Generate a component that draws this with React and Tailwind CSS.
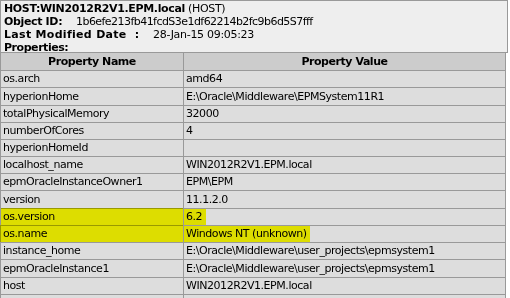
const rows = [
  ['os.arch', 'amd64'],
  ['hyperionHome', 'E:\\Oracle\\Middleware\\EPMSystem11R1', true],
  ['totalPhysicalMemory', '32000'],
  ['numberOfCores', '4'],
  ['hyperionHomeId', ''],
  ['localhost_name', 'WIN2012R2V1.EPM.local'],
  ['epmOracleInstanceOwner1', 'EPM\\EPM'],
  ['version', '11.1.2.0', true],
  ['os.version', '6.2'],
  ['os.name', 'Windows NT (unknown)'],
  ['instance_home', 'E:\\Oracle\\Middleware\\user_projects\\epmsystem1'],
  ['epmOracleInstance1', 'E:\\Oracle\\Middleware\\user_projects\\epmsystem1', true],
  ['host', 'WIN2012R2V1.EPM.local'],
  ['', ''],
]

function Cell({ tall, children }) {
  return (
    <td
      className={
        tall
          ? 'h-[17px] p-0 pl-[2px] border border-[#999] bg-[#dddddd] leading-[17px] whitespace-nowrap'
          : 'h-[16px] p-0 pl-[2px] border border-[#999] bg-[#dddddd] leading-[16px] whitespace-nowrap'
      }
    >
      {children}
    </td>
  )
}

export default function App() {
  return (
    <div className="relative w-[510px] h-[298px] overflow-hidden bg-white text-[11px] text-black font-['Verdana','DejaVu_Sans',sans-serif]">
      <div className="w-[508px] h-[53px] border border-[#999] bg-[#eeeeee] px-[3px] pt-[1px] leading-[13px]">
        <div className="tracking-[-0.35px]">
          <span className="font-bold">HOST:WIN2012R2V1.EPM.local</span> (HOST)
        </div>
        <div className="flex">
          <span className="w-[72px] font-bold tracking-[-0.35px]">Object ID:</span>
          <span className="tracking-[-0.55px]">1b6efe213fb41fcdS3e1df62214b2fc9b6d5S7fff</span>
        </div>
        <div className="flex">
          <span className="w-[149px] font-bold tracking-[0.3px]">Last Modified Date&nbsp;&nbsp;:</span>
          <span className="tracking-[-0.3px]">28-Jan-15 09:05:23</span>
        </div>
        <div className="font-bold tracking-[-0.45px]">Properties:</div>
      </div>

      <table className="w-[506px] border-collapse -mt-px table-fixed tracking-[-0.45px]">
        <thead>
          <tr>
            <th className="w-[183px] h-[17px] p-0 border border-[#999] bg-[#cccccc] font-bold leading-[17px] text-center">
              Property Name
            </th>
            <th className="h-[17px] p-0 border border-[#999] bg-[#cccccc] font-bold leading-[17px] text-center">
              Property Value
            </th>
          </tr>
        </thead>
        <tbody>
          {rows.map(([name, value, tall], i) => (
            <tr key={i}>
              <Cell tall={tall}>{name}</Cell>
              <Cell tall={tall}>{value}</Cell>
            </tr>
          ))}
        </tbody>
      </table>

      {/* highlighter marks */}
      <span className="absolute left-[1px] top-[208px] w-[182px] h-[17px] bg-[#ffff00] mix-blend-multiply" />
      <span className="absolute left-[184px] top-[209px] w-[22px] h-[16px] bg-[#ffff00] mix-blend-multiply" />
      <span className="absolute left-0 top-[225px] w-[183px] h-[17px] bg-[#ffff00] mix-blend-multiply" />
      <span className="absolute left-[184px] top-[226px] w-[126px] h-[16px] bg-[#ffff00] mix-blend-multiply" />
    </div>
  )
}
